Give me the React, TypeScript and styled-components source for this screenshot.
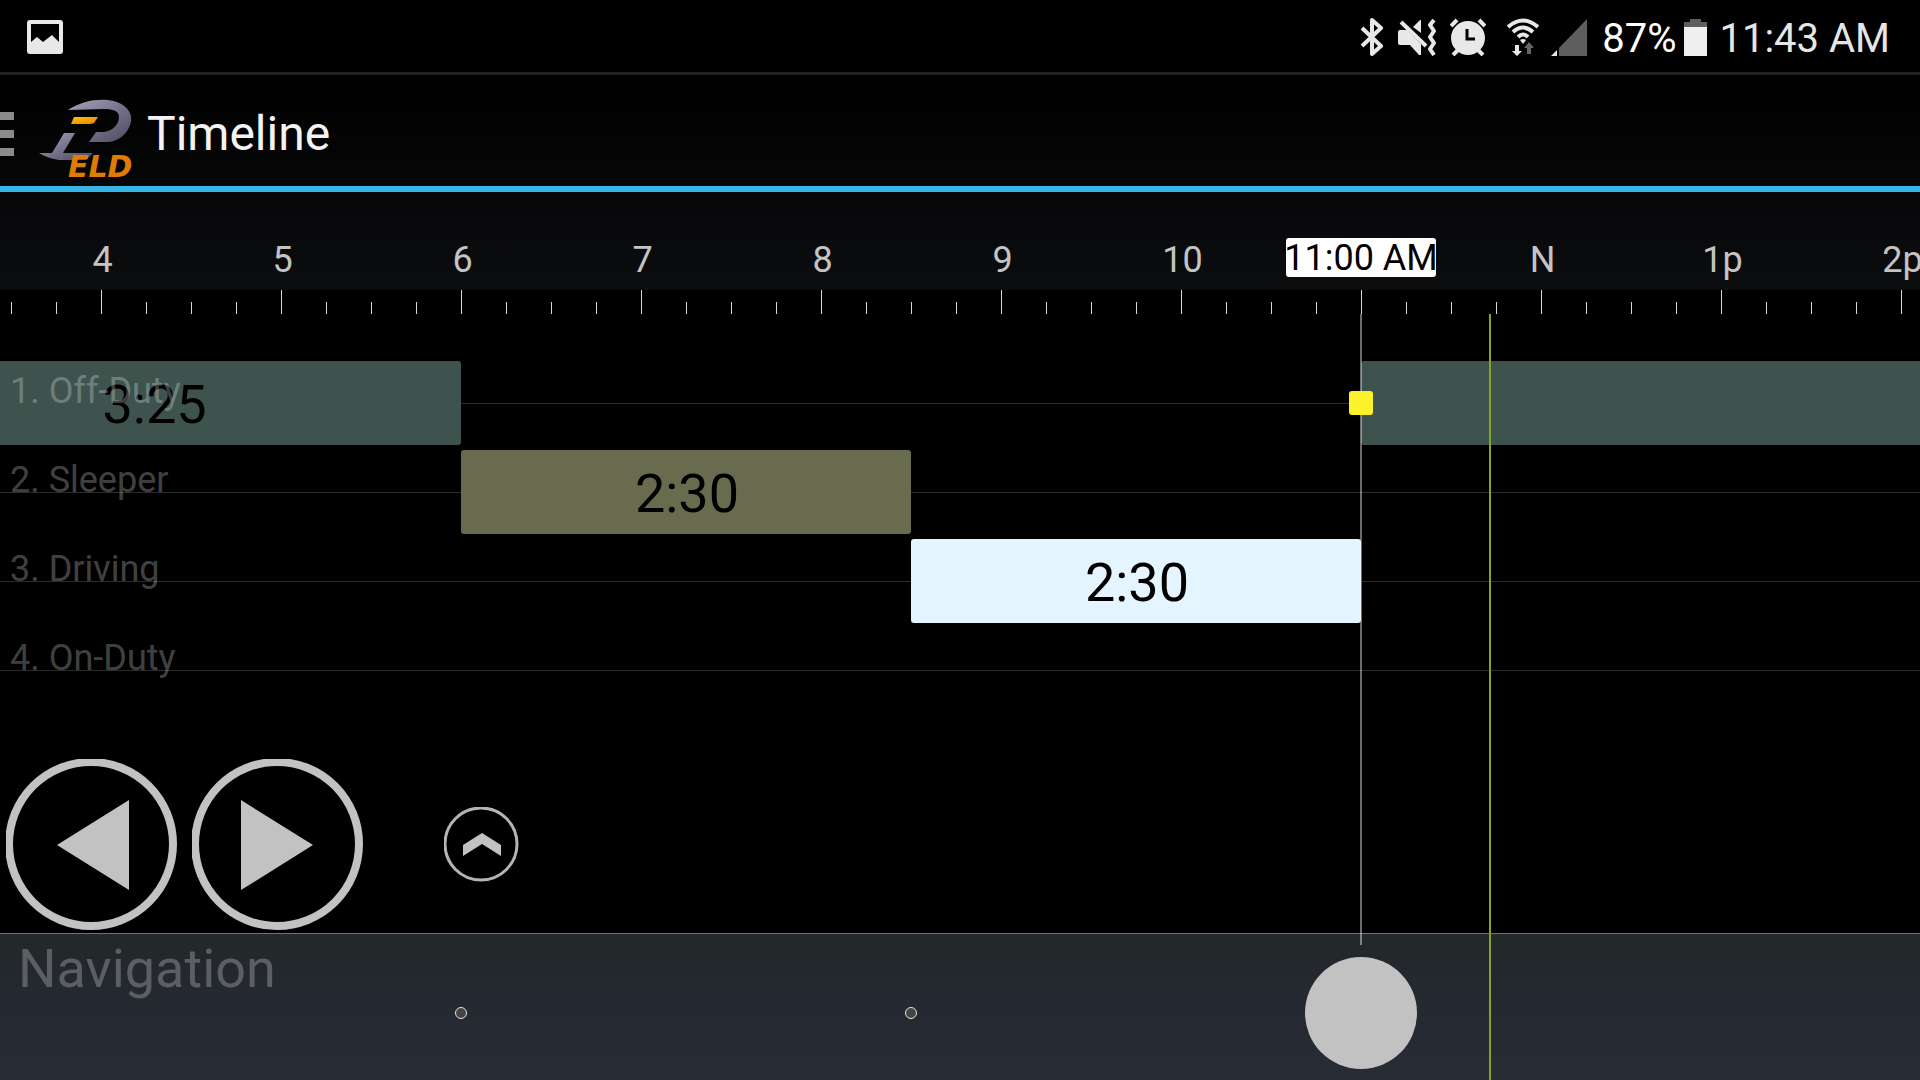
import React, { useState } from "react";
import styled, { createGlobalStyle } from "styled-components";

const VIEW_START = 619 / 3;
const VIEW_SPAN = 640;
const NOW = 11 * 60 + 43;

const pct = (minutes: number) => `${(minutes / VIEW_SPAN) * 100}%`;
const at = (minutes: number) => pct(minutes - VIEW_START);

const formatTime = (minutes: number) => {
  const h = Math.floor(minutes / 60);
  const m = Math.floor(minutes % 60);
  return `${h % 12 || 12}:${String(m).padStart(2, "0")} ${h < 12 ? "AM" : "PM"}`;
};

const formatLength = (minutes: number) =>
  `${Math.floor(minutes / 60)}:${String(minutes % 60).padStart(2, "0")}`;

type Segment = { start: number; end: number; label?: boolean };
type LaneData = { name: string; color: string; segments: Segment[] };

const lanes: LaneData[] = [
  {
    name: "1. Off-Duty",
    color: "#3e534e",
    segments: [
      { start: 155, end: 360, label: true },
      { start: 660, end: 900 },
    ],
  },
  { name: "2. Sleeper", color: "#696b4f", segments: [{ start: 360, end: 510, label: true }] },
  { name: "3. Driving", color: "#e4f5ff", segments: [{ start: 510, end: 660, label: true }] },
  { name: "4. On-Duty", color: "#696b4f", segments: [] },
];

const hours = [4, 5, 6, 7, 8, 9, 10, 11, 12, 13, 14];
const quarters = Array.from({ length: 43 }, (_, i) => 210 + i * 15);
const hourLabel = (h: number) => (h === 12 ? "N" : h > 12 ? `${h - 12}p` : `${h}`);

const GlobalStyle = createGlobalStyle`
  *, *::before, *::after { box-sizing: border-box; }
  body {
    margin: 0;
    background: #000;
    color: #fff;
    font-family: Roboto, "Liberation Sans", sans-serif;
  }
`;

const Screen = styled.div`
  display: flex;
  flex-direction: column;
  min-height: 100vh;
  overflow: hidden;
`;

const StatusBar = styled.header`
  display: flex;
  align-items: center;
  justify-content: space-between;
  height: 75px;
  padding: 2px 30px 0 27px;
  border-bottom: 3px solid #202020;
`;

const StatusGroup = styled.div<{ $gap: number }>`
  display: flex;
  align-items: center;
  gap: ${(p) => p.$gap}px;
`;

const StatusText = styled.span<{ $dim?: boolean }>`
  padding-top: 4px;
  font-size: 40px;
  line-height: 48px;
  color: ${(p) => (p.$dim ? "#e6e6e6" : "#fff")};
`;

const Glyph = styled.svg`
  display: block;
  flex: none;
`;

const TopPanel = styled.div`
  background: linear-gradient(#000, #0c0d0f);
`;

const AppBar = styled.div`
  display: flex;
  align-items: center;
  height: 117px;
  padding-top: 6px;
  border-bottom: 6px solid #36b4e6;
`;

const MenuButton = styled.button`
  display: flex;
  flex-direction: column;
  gap: 10px;
  width: 14px;
  padding: 0;
  border: 0;
  background: none;
  cursor: pointer;
`;

const MenuLine = styled.span`
  height: 8px;
  background: #8b8b8d;
`;

const Logo = styled.svg`
  display: block;
  margin: 18px 0 0 24px;
`;

const Title = styled.h1`
  margin: 0;
  padding-left: 9px;
  font-size: 48px;
  line-height: 56px;
  font-weight: 400;
  color: #f3f3f3;
`;

const Ruler = styled.div`
  position: relative;
  height: 98px;
`;

const HourLabel = styled.span`
  position: absolute;
  top: 46px;
  padding-left: 3px;
  transform: translateX(-50%);
  font-size: 36px;
  line-height: 44px;
  color: #c4c4c4;
`;

const TimeBadge = styled.output`
  position: absolute;
  top: 46px;
  display: flex;
  justify-content: center;
  width: 150px;
  height: 39px;
  transform: translateX(-50%);
  border-radius: 3px;
  background: #fff;
  color: #000;
  font-size: 36px;
  line-height: 40px;
  white-space: nowrap;
`;

const Board = styled.main`
  position: relative;
  display: flex;
  flex-direction: column;
  flex: 1;
`;

const Ticks = styled.div`
  position: relative;
  height: 24px;
`;

const Tick = styled.i<{ $major: boolean }>`
  position: absolute;
  bottom: 0;
  width: 1px;
  height: ${(p) => (p.$major ? 24 : 12)}px;
  background: #d8d8d8;
`;

const Lanes = styled.section`
  display: flex;
  flex-direction: column;
  gap: 5px;
  padding-top: 47px;
`;

const Lane = styled.div`
  position: relative;
  display: flex;
  height: 84px;
  background: linear-gradient(#2b2b2b, #2b2b2b) 0 42px / 100% 1px no-repeat;
`;

const LaneName = styled.h2`
  position: absolute;
  left: 10px;
  top: 8px;
  margin: 0;
  font-size: 36px;
  line-height: 44px;
  font-weight: 400;
  color: rgba(255, 255, 255, 0.27);
`;

const Bar = styled.div<{ $color: string }>`
  display: flex;
  flex: none;
  align-items: center;
  justify-content: center;
  padding: 4px 0 0 2px;
  border-radius: 3px;
  background: ${(p) => p.$color};
  color: #000;
  font-size: 54px;
  line-height: 64px;
`;

const Controls = styled.div`
  display: flex;
  align-items: center;
  gap: 15px;
  padding: 47px 6px 3px;
`;

const RoundButton = styled.button<{ $size: number; $lead?: number }>`
  width: ${(p) => p.$size}px;
  height: ${(p) => p.$size}px;
  margin-left: ${(p) => p.$lead ?? 0}px;
  padding: 0;
  border: 0;
  border-radius: 50%;
  background: none;
  cursor: pointer;
`;

const Navigation = styled.section`
  position: relative;
  flex: 1;
  min-height: 147px;
  border-top: 1px solid #707374;
  background: linear-gradient(#23282a, #24282f 30%, #272c35);
`;

const NavLabel = styled.label`
  display: block;
  padding: 3px 18px;
  font-size: 54px;
  line-height: 64px;
  color: #5b5f64;
`;

const EventDot = styled.i`
  position: absolute;
  top: 73px;
  width: 12px;
  height: 12px;
  transform: translateX(-50%);
  border: 1px solid #e4e4e4;
  border-radius: 50%;
  background: #444;
`;

const Scrubber = styled.input`
  position: absolute;
  left: -56px;
  top: 23px;
  width: calc(100% + 112px);
  height: 112px;
  margin: 0;
  appearance: none;
  background: none;
  cursor: pointer;

  &::-webkit-slider-thumb {
    appearance: none;
    width: 112px;
    height: 112px;
    border: 0;
    border-radius: 50%;
    background: #c2c2c2;
  }
`;

const CursorLine = styled.div`
  position: absolute;
  top: 24px;
  bottom: 135px;
  width: 2px;
  transform: translateX(-1px);
  background: rgba(255, 255, 255, 0.42);
  pointer-events: none;
`;

const NowLine = styled.div`
  position: absolute;
  top: 24px;
  bottom: 0;
  width: 2px;
  transform: translateX(-1px);
  background: #87a224;
  pointer-events: none;
`;

const Handle = styled.div`
  position: absolute;
  top: 101px;
  width: 24px;
  height: 24px;
  transform: translateX(-50%);
  border-radius: 3px;
  background: #fcf22c;
`;

const PictureIcon = () => (
  <Glyph width="36" height="34" viewBox="0 0 36 34" aria-hidden="true">
    <path
      fill="#e8e8e8"
      fillRule="evenodd"
      d="M3 0h30a3 3 0 0 1 3 3v28a3 3 0 0 1-3 3H3a3 3 0 0 1-3-3V3a3 3 0 0 1 3-3zM4 4v18l6-5 6 5 9-7 7 7V4z"
    />
  </Glyph>
);

const BluetoothIcon = () => (
  <Glyph width="24" height="38" viewBox="0 0 24 38" aria-hidden="true">
    <path d="M2 10l19 18-9 8V2l9 8L2 28" fill="none" stroke="#e8e8e8" strokeWidth="4" strokeLinejoin="round" />
  </Glyph>
);

const MuteVibrateIcon = () => (
  <Glyph width="38" height="38" viewBox="0 0 38 38" aria-hidden="true">
    <path d="M2 12h7L23 26v11h-2l-9-10H2a2 2 0 0 1-2-2V14a2 2 0 0 1 2-2zM15 9l7-7h1v13z" fill="#e8e8e8" />
    <path d="M3 4l25 24" stroke="#e8e8e8" strokeWidth="4" />
    <path d="M36 2l-4 5 4 6-4 6 4 6-4 6 4 6" fill="none" stroke="#e8e8e8" strokeWidth="4" strokeLinejoin="round" />
  </Glyph>
);

const AlarmIcon = () => (
  <Glyph width="36" height="38" viewBox="0 0 36 38" aria-hidden="true">
    <circle cx="18" cy="20" r="17" fill="#e8e8e8" />
    <path d="M1 8l6-6M35 8l-6-6M3 37l6-6M33 37l-6-6" stroke="#e8e8e8" strokeWidth="4" />
    <path d="M17 11v10h8" fill="none" stroke="#000" strokeWidth="3" />
  </Glyph>
);

const WifiIcon = () => (
  <Glyph width="32" height="38" viewBox="0 0 32 38" aria-hidden="true">
    <path d="M1 9q15-13 30 0M6 14q10-9 20 0M11 19q5-5 10 0" fill="none" stroke="#e8e8e8" strokeWidth="4" />
    <path d="M13 22q3-2 6 0l-3 4z" fill="#e8e8e8" />
    <path d="M8 27h4v6h3l-5 5-5-5h3z" fill="#e8e8e8" />
    <path d="M20 36h4v-6h3l-5-6-5 6h3z" fill="#666" />
  </Glyph>
);

const SignalIcon = () => (
  <Glyph width="36" height="37" viewBox="0 0 36 37" aria-hidden="true">
    <path d="M36 0v37H8V29z" fill="#5e5e5e" />
    <path d="M0 37l6-6v6z" fill="#e8e8e8" />
  </Glyph>
);

const BatteryIcon = () => (
  <Glyph width="23" height="37" viewBox="0 0 23 37" aria-hidden="true">
    <path d="M6 0h11v3h6v5H0V3h6z" fill="#5e5e5e" />
    <path d="M0 8h23v29H0z" fill="#efefef" />
  </Glyph>
);

const EldLogo = () => (
  <Logo width="100" height="88" viewBox="0 0 100 88" role="img" aria-label="ELD">
    <defs>
      <linearGradient id="steel" x1="0" y1="0" x2="1" y2="1">
        <stop offset="0" stopColor="#a7a3bd" />
        <stop offset="0.5" stopColor="#77738c" />
        <stop offset="1" stopColor="#4c4960" />
      </linearGradient>
      <linearGradient id="amber" x1="0" y1="0" x2="1" y2="1">
        <stop offset="0" stopColor="#ffc400" />
        <stop offset="1" stopColor="#e87f00" />
      </linearGradient>
    </defs>
    <path
      d="M30 11C42 3 56 0 70 1C86 3 95 12 93 23C90 36 79 43 69 43H51L58 33H66C75 32 81 25 81 18C81 12 75 10 66 10Z"
      fill="url(#steel)"
    />
    <path d="M26 34H37L25 54H55L48 61H21C14 60 8 58 1 54H14Z" fill="url(#steel)" />
    <path d="M36 18H60L56 24Q54 25 51 25H33Z" fill="url(#amber)" />
    <text
      x="30"
      y="78"
      fontFamily="'DejaVu Sans', 'Liberation Sans', sans-serif"
      fontSize="30"
      fontWeight="700"
      fontStyle="italic"
      fill="#e07c06"
    >
      ELD
    </text>
  </Logo>
);

const ArrowIcon = ({ flip }: { flip?: boolean }) => (
  <Glyph width="171" height="171" viewBox="0 0 171 171" aria-hidden="true">
    <circle cx="85" cy="85" r="82" fill="none" stroke="#c2c2c2" strokeWidth="8" />
    <path d={flip ? "M49 41v90l72-45z" : "M123 41v90L51 86z"} fill="#c2c2c2" />
  </Glyph>
);

const ChevronIcon = () => (
  <Glyph width="75" height="75" viewBox="0 0 75 75" aria-hidden="true">
    <circle cx="37" cy="37" r="36" fill="none" stroke="#b4b4b4" strokeWidth="3" />
    <path d="M38 26l19 12v11L38 37 19 49V38z" fill="#c2c2c2" />
  </Glyph>
);

export default function App() {
  const [time, setTime] = useState(660);

  return (
    <Screen>
      <GlobalStyle />
      <StatusBar>
        <PictureIcon />
        <StatusGroup $gap={15}>
          <StatusGroup $gap={21}>
            <StatusGroup $gap={14}>
              <BluetoothIcon />
              <MuteVibrateIcon />
              <AlarmIcon />
            </StatusGroup>
            <StatusGroup $gap={12}>
              <WifiIcon />
              <SignalIcon />
            </StatusGroup>
          </StatusGroup>
          <StatusGroup $gap={12}>
            <StatusGroup $gap={8}>
              <StatusText>87%</StatusText>
              <BatteryIcon />
            </StatusGroup>
            <StatusText $dim>11:43 AM</StatusText>
          </StatusGroup>
        </StatusGroup>
      </StatusBar>

      <TopPanel>
        <AppBar>
          <MenuButton aria-label="Open menu">
            <MenuLine />
            <MenuLine />
            <MenuLine />
          </MenuButton>
          <EldLogo />
          <Title>Timeline</Title>
        </AppBar>
        <Ruler>
          {hours
            .filter((h) => Math.abs(h * 60 - time) >= 30)
            .map((h) => (
              <HourLabel key={h} style={{ left: at(h * 60) }}>
                {hourLabel(h)}
              </HourLabel>
            ))}
          <TimeBadge style={{ left: at(time) }}>{formatTime(time)}</TimeBadge>
        </Ruler>
      </TopPanel>

      <Board>
        <Ticks>
          {quarters.map((q) => (
            <Tick key={q} $major={q % 60 === 0} style={{ left: at(q) }} />
          ))}
        </Ticks>
        <Lanes>
          {lanes.map((lane) => (
            <Lane key={lane.name}>
              {lane.segments.map((s, i) => (
                <Bar
                  key={s.start}
                  $color={lane.color}
                  style={{
                    marginLeft: pct(s.start - (i ? lane.segments[i - 1].end : VIEW_START)),
                    width: pct(s.end - s.start),
                  }}
                >
                  {s.label && formatLength(s.end - s.start)}
                </Bar>
              ))}
              <LaneName>{lane.name}</LaneName>
            </Lane>
          ))}
        </Lanes>
        <Controls>
          <RoundButton $size={171} aria-label="Previous">
            <ArrowIcon />
          </RoundButton>
          <RoundButton $size={171} aria-label="Next">
            <ArrowIcon flip />
          </RoundButton>
          <RoundButton $size={75} $lead={66} aria-label="Expand">
            <ChevronIcon />
          </RoundButton>
        </Controls>
        <Navigation>
          <NavLabel htmlFor="scrubber">Navigation</NavLabel>
          <EventDot style={{ left: at(360) }} />
          <EventDot style={{ left: at(510) }} />
          <Scrubber
            id="scrubber"
            type="range"
            min={VIEW_START}
            max={VIEW_START + VIEW_SPAN}
            step="any"
            value={time}
            onChange={(e) => setTime(Number(e.target.value))}
          />
        </Navigation>
        <CursorLine style={{ left: at(time) }} />
        <Handle style={{ left: at(time) }} />
        <NowLine style={{ left: at(NOW) }} />
      </Board>
    </Screen>
  );
}
